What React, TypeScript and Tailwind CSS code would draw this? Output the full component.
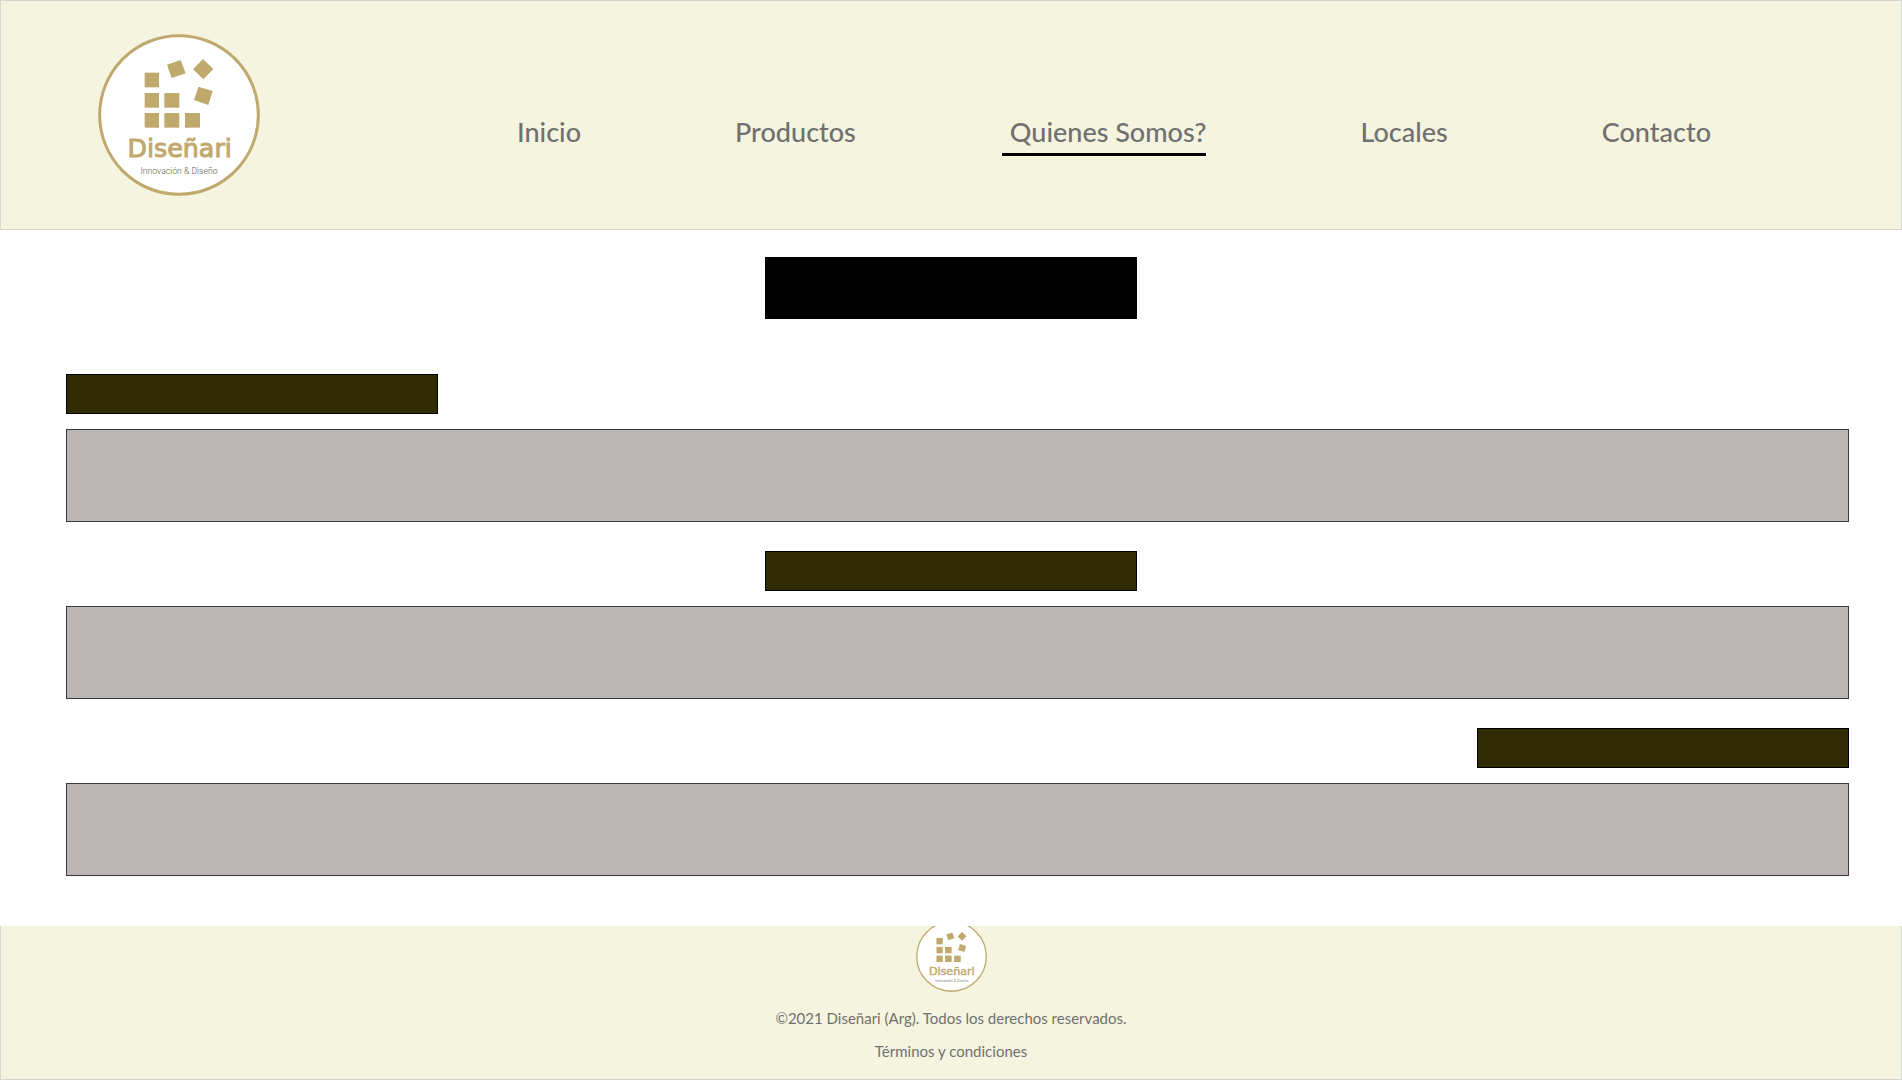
const navItems = [
  { label: "Inicio", href: "#inicio" },
  { label: "Productos", href: "#productos" },
  { label: "Quienes Somos?", href: "#quienes-somos", current: true },
  { label: "Locales", href: "#locales" },
  { label: "Contacto", href: "#contacto" },
];

const sections = [
  { id: "first", heading: "self-start ml-[66px]" },
  { id: "second", heading: "self-center" },
  { id: "third", heading: "self-end mr-[53px]" },
];

function Logo({ className }: { className: string }) {
  return (
    <svg viewBox="54 42 486 486" className={className} role="img" aria-label="Diseñari">
      <circle cx="297" cy="285" r="238" fill="#ffffff" stroke="#bfa96d" strokeWidth="9" />
      <g fill="#bfa96d">
        <rect x="194" y="158" width="43" height="44" />
        <rect x="194" y="219" width="43" height="44" />
        <rect x="253" y="219" width="45" height="44" />
        <rect x="194" y="279" width="43" height="44" />
        <rect x="253" y="279" width="45" height="44" />
        <rect x="315" y="279" width="45" height="44" />
        <polygon points="261,134 302,120 317,160 275,174" />
        <polygon points="369,117 400,147 370,178 339,148" />
        <polygon points="355,200 398,213 385,255 342,240" />
      </g>
      <text x="299" y="411" textAnchor="middle" fontSize="76" fill="#bfa96d" stroke="#bfa96d" strokeWidth="3" className="font-['DejaVu_Sans',sans-serif]">
        Diseñari
      </text>
      <text x="297" y="462" textAnchor="middle" fontSize="26" fill="#5d6142" className="font-['Roboto',sans-serif] font-light">
        Innovación &amp; Diseño
      </text>
    </svg>
  );
}

export default function App() {
  return (
    <div className="flex min-h-screen flex-col bg-white font-['Lato',sans-serif] text-[#707070]">
      <header className="flex items-start border border-[#d5d8cf] bg-[#f5f4df] pt-[33px] pb-[33px] pl-[97px]">
        <Logo className="size-[162px] shrink-0" />
        <nav aria-label="Principal" className="mr-[190px] ml-[257px] flex-1 pt-20">
          <ul className="flex justify-between text-[27px] leading-9 font-medium">
            {navItems.map((item) => (
              <li key={item.label} className="relative whitespace-nowrap">
                <a href={item.href} aria-current={item.current ? "page" : undefined}>
                  {item.label}
                </a>
                {item.current && <span className="absolute -bottom-1.5 right-0 -left-2 h-[3px] bg-black" />}
              </li>
            ))}
          </ul>
        </nav>
      </header>

      <main className="flex flex-1 flex-col gap-[29px] pb-12">
        <div className="mt-[27px] mb-[26px] h-[62px] w-[372px] self-center bg-black" />
        {sections.map((section) => (
          <section key={section.id} className="flex flex-col gap-[15px]">
            <div className={`h-10 w-[372px] border border-black bg-[#302b02] ${section.heading}`} />
            <div className="mr-[53px] ml-[66px] h-[93px] border border-[#3a3a3a] bg-[#bdb6b6]" />
          </section>
        ))}
      </main>

      <footer className="flex h-[154px] flex-col items-center overflow-hidden border-x border-b border-[#d5d8cf] bg-[#f5f4df] text-[15px] leading-6">
        <Logo className="-mt-[5px] size-[71px] shrink-0" />
        <p className="mt-3.5">©2021 Diseñari (Arg). Todos los derechos reservados.</p>
        <a href="#terminos" className="mt-[9px]">
          Términos y condiciones
        </a>
      </footer>
    </div>
  );
}
